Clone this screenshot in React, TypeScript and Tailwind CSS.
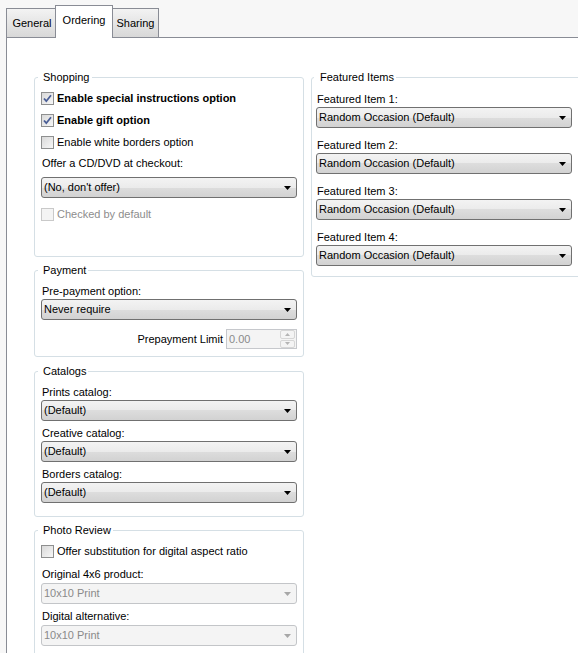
import type { ReactNode } from 'react'

const FONT = "font-['Liberation_Sans',Arial,sans-serif]"

function Tab({ label, active, className = '' }: { label: string; active?: boolean; className?: string }) {
  if (active) {
    return (
      <div className={`relative z-10 flex h-[33px] items-center justify-center border border-b-0 border-[#898c95] bg-white pb-[3px] ${className}`}>
        {label}
      </div>
    )
  }
  return (
    <div className={`flex h-[30px] items-center justify-center border border-[#898c95] bg-linear-to-b from-[#f3f3f3] to-[#d8d8d8] ${className}`}>
      {label}
    </div>
  )
}

function GroupBox({
  title,
  className = '',
  legendClass = 'ml-[-3px] pl-[5px] pr-[2px]',
  children,
}: {
  title: string
  className?: string
  legendClass?: string
  children: ReactNode
}) {
  return (
    <fieldset className={`rounded-[3px] border border-[#d5dfe5] ${className}`}>
      <legend className={`text-[11px] leading-[13px] text-black ${legendClass}`}>{title}</legend>
      {children}
    </fieldset>
  )
}

function CheckBox({ checked, disabled }: { checked?: boolean; disabled?: boolean }) {
  return (
    <span
      className={`flex h-[13px] w-[13px] shrink-0 items-center justify-center border ${
        disabled ? 'border-[#c9c9c9] bg-[#f4f4f4]' : 'border-[#8e8f8f] bg-linear-to-br from-[#d9d9d9] to-[#f7f7f7]'
      }`}
    >
      {checked && (
        <svg width="11" height="11" viewBox="0 0 11 11">
          <path d="M2 5.5 L4.3 8.2 L9 2.2" fill="none" stroke="#4a5e96" strokeWidth="1.8" />
        </svg>
      )}
    </span>
  )
}

function CheckRow({
  label,
  checked,
  bold,
  disabled,
  className = '',
}: {
  label: string
  checked?: boolean
  bold?: boolean
  disabled?: boolean
  className?: string
}) {
  return (
    <div className={`flex h-[13px] items-center ${className}`}>
      <CheckBox checked={checked} disabled={disabled} />
      <span
        className={`ml-[3px] text-[11px] leading-[13px] ${bold ? 'font-bold' : ''} ${
          disabled ? 'text-[#8d8d8d]' : 'text-black'
        }`}
      >
        {label}
      </span>
    </div>
  )
}

function FieldLabel({ children, className = '' }: { children: ReactNode; className?: string }) {
  return <div className={`h-[13px] pl-px text-[11px] leading-[13px] text-black ${className}`}>{children}</div>
}

function Combo({ value, disabled, className = '' }: { value: string; disabled?: boolean; className?: string }) {
  return (
    <div
      className={`flex h-[21px] w-[256px] items-center justify-between rounded-[3px] border pl-[2px] pr-[5px] text-[11px] ${
        disabled
          ? 'border-[#c3c5c8] bg-[#f4f4f4] text-[#8a8a8a]'
          : 'border-[#707070] bg-[linear-gradient(to_bottom,#f3f3f3_0%,#ebebeb_50%,#dddddd_50%,#d2d2d2_100%)] text-black'
      } ${className}`}
    >
      <span>{value}</span>
      <svg width="7" height="4" viewBox="0 0 7 4">
        <path d="M0 0 H7 L3.5 4 Z" fill={disabled ? '#a7a7a7' : '#000'} />
      </svg>
    </div>
  )
}

function SpinBox({ value }: { value: string }) {
  return (
    <div className="ml-[3px] flex h-[20px] w-[71px] items-center justify-between border border-[#c6c8cc] bg-[#f4f4f4] pl-[2px] text-[11px] text-[#8a8a8a]">
      <span>{value}</span>
      <div className="mr-px flex h-[18px] w-[15px] flex-col gap-px">
        <div className="flex flex-1 items-center justify-center rounded-[2px] border border-[#d6d6d6] bg-[#f4f4f4]">
          <svg width="5" height="3" viewBox="0 0 5 3">
            <path d="M0 3 H5 L2.5 0 Z" fill="#b4b4b4" />
          </svg>
        </div>
        <div className="flex flex-1 items-center justify-center rounded-[2px] border border-[#d6d6d6] bg-[#f4f4f4]">
          <svg width="5" height="3" viewBox="0 0 5 3">
            <path d="M0 0 H5 L2.5 3 Z" fill="#b4b4b4" />
          </svg>
        </div>
      </div>
    </div>
  )
}

const FEATURED = ['Featured Item 1:', 'Featured Item 2:', 'Featured Item 3:', 'Featured Item 4:']

export default function App() {
  return (
    <div className={`h-[653px] w-[578px] overflow-hidden bg-[#f7f7f7] ${FONT} text-[11px] text-black`}>
      {/* ── Tabs ─────────────────────────────────────────── */}
      <div className="flex h-[38px] items-end pl-[6px]">
        <Tab label="General" className="w-[50px] pl-[2px]" />
        <Tab label="Ordering" active className="ml-[-1px] w-[58px]" />
        <Tab label="Sharing" className="ml-[-1px] w-[47px]" />
      </div>

      {/* ── Panel ────────────────────────────────────────── */}
      <div className="-mt-px ml-[6px] flex h-[700px] border-l border-t border-[#898c95] bg-white pl-[27px] pt-[33px]">
        {/* Left column */}
        <div className="flex w-[270px] shrink-0 flex-col">
          <GroupBox title="Shopping" className="h-[186px] px-[6px]">
            <CheckRow label="Enable special instructions option" checked bold className="mt-[8px]" />
            <CheckRow label="Enable gift option" checked bold className="mt-[9px]" />
            <CheckRow label="Enable white borders option" className="mt-[9px]" />
            <FieldLabel className="mt-[8px]">Offer a CD/DVD at checkout:</FieldLabel>
            <Combo value="(No, don't offer)" className="mt-[7px]" />
            <CheckRow label="Checked by default" disabled className="mt-[10px]" />
          </GroupBox>

          <GroupBox title="Payment" className="mt-[7px] h-[93px] px-[6px]">
            <FieldLabel className="mt-[8px]">Pre-payment option:</FieldLabel>
            <Combo value="Never require" className="mt-px" />
            <div className="mt-[9px] flex items-center justify-end">
              <span>Prepayment Limit</span>
              <SpinBox value="0.00" />
            </div>
          </GroupBox>

          <GroupBox title="Catalogs" className="mt-[8px] h-[152px] px-[6px]">
            <FieldLabel className="mt-[8px]">Prints catalog:</FieldLabel>
            <Combo value="(Default)" className="mt-px" />
            <FieldLabel className="mt-[6px]">Creative catalog:</FieldLabel>
            <Combo value="(Default)" className="mt-px" />
            <FieldLabel className="mt-[6px]">Borders catalog:</FieldLabel>
            <Combo value="(Default)" className="mt-px" />
          </GroupBox>

          <GroupBox title="Photo Review" className="mt-[7px] h-[141px] px-[6px]">
            <CheckRow label="Offer substitution for digital aspect ratio" className="mt-[8px]" />
            <FieldLabel className="mt-[10px]">Original 4x6 product:</FieldLabel>
            <Combo value="10x10 Print" disabled className="mt-[2px]" />
            <FieldLabel className="mt-[6px]">Digital alternative:</FieldLabel>
            <Combo value="10x10 Print" disabled className="mt-[2px]" />
          </GroupBox>
        </div>

        {/* Right column */}
        <div className="ml-[7px] w-[275px] shrink-0">
          <GroupBox title="Featured Items" className="h-[206px] px-[4px]" legendClass="ml-[-2px] pl-[6px] pr-[2px]">
            {FEATURED.map((label, i) => (
              <div key={label} className={i === 0 ? 'mt-[9px]' : 'mt-[11px]'}>
                <FieldLabel className="pl-[3px]">{label}</FieldLabel>
                <Combo value="Random Occasion (Default)" className="mt-px" />
              </div>
            ))}
          </GroupBox>
        </div>
      </div>
    </div>
  )
}
